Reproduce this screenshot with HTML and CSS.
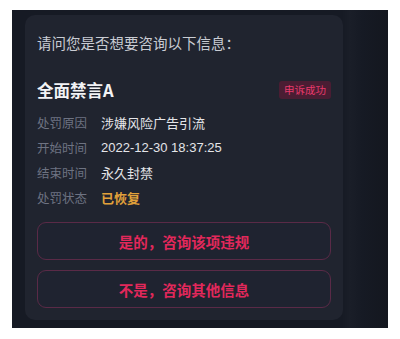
FILE: index.html
```html
<!DOCTYPE html>
<html lang="zh-CN">
<head>
    <meta charset="UTF-8">
    <meta name="viewport" content="width=device-width, initial-scale=1.0">
    <title>咨询</title>
    <link rel="stylesheet" href="styles.css">
</head>
<body>
    <div class="frame">
        <div class="card">
            <p class="question">请问您是否想要咨询以下信息：</p>
            <div class="title-row">
                <h2>全面禁言A</h2>
                <span class="badge">申诉成功</span>
            </div>
            <div class="info">
                <div class="row"><span class="label">处罚原因</span><span class="value">涉嫌风险广告引流</span></div>
                <div class="row"><span class="label">开始时间</span><span class="value">2022-12-30 18:37:25</span></div>
                <div class="row"><span class="label">结束时间</span><span class="value">永久封禁</span></div>
                <div class="row"><span class="label">处罚状态</span><span class="value status">已恢复</span></div>
            </div>
            <div class="actions">
                <button>是的，咨询该项违规</button>
                <button>不是，咨询其他信息</button>
            </div>
        </div>
    </div>
</body>
</html>
```

FILE: styles.css
```css
body {
    margin: 0;
    padding: 0;
    background-color: #fff;
    font-family: "Noto Sans CJK SC", "Liberation Sans", sans-serif;
}
.frame {
    width: 376px;
    height: 318px;
    margin: 10px 12px 0;
    padding: 5px 45px 8px 13px;
    box-sizing: border-box;
    background: linear-gradient(to right, #161a24 0, #161a24 330px, #1a1e28 338px, #161a24 350px, #14171f 376px);
}
.card {
    height: 305px;
    box-sizing: border-box;
    padding: 18px 12px 12px 12px;
    background-color: #20242f;
    border-radius: 10px;
}
.question {
    margin: 0;
    font-size: 14.5px;
    line-height: 20px;
    color: #c9ccd3;
}
.title-row {
    display: flex;
    align-items: center;
    justify-content: space-between;
    margin-top: 26px;
    height: 22px;
}
.title-row h2 {
    margin: 0;
    font-size: 16.5px;
    font-weight: bold;
    color: #f2f3f5;
}
.badge {
    font-size: 10.5px;
    line-height: 16px;
    padding: 1px 5px;
    border-radius: 3px;
    background-color: #4a1d33;
    color: #e83a6c;
}
.info {
    margin-top: 9px;
}
.row {
    display: flex;
    height: 25px;
    align-items: center;
    font-size: 12.5px;
}
.label {
    width: 64px;
    color: #6e7382;
}
.value {
    font-family: "Liberation Sans", "Noto Sans CJK SC", sans-serif;
    font-size: 13px;
    color: #e4e5e9;
}
.status {
    color: #e2a13a;
    font-weight: bold;
}
.actions {
    display: flex;
    flex-direction: column;
    gap: 10px;
    margin-top: 12px;
}
button {
    height: 38px;
    width: 100%;
    margin: 0;
    border: 1px solid #5a2a47;
    border-radius: 9px;
    background-color: #1f2330;
    color: #e2285b;
    font-family: inherit;
    font-size: 14.5px;
    font-weight: bold;
    cursor: pointer;
}
```
